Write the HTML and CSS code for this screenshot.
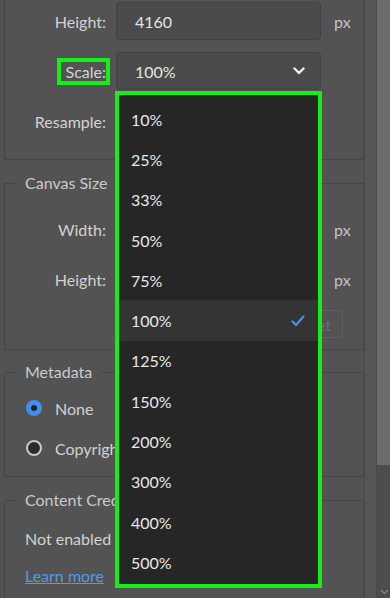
FILE: index.html
```html
<!DOCTYPE html>
<html lang="en">
<head>
  <meta charset="UTF-8" />
  <meta name="viewport" content="width=device-width, initial-scale=1.0" />
  <title>Image Size</title>
  <link rel="stylesheet" href="styles.css">
</head>
<body>
  <div class="window">
    <div class="panel">
      <section class="group group-top">
        <div class="row">
          <label class="lbl">Height:</label>
          <div class="field">4160</div>
          <span class="unit">px</span>
        </div>
        <div class="row">
          <label class="lbl"><span class="mark">Scale:</span></label>
          <div class="field select">
            <span>100%</span>
            <svg class="chev" width="12" height="8" viewBox="0 0 12 8"><path d="M1.5 1.5 L6 6 L10.5 1.5" fill="none" stroke="#f2f2f2" stroke-width="2.4" stroke-linecap="round" stroke-linejoin="round"/></svg>
          </div>
        </div>
        <div class="row">
          <label class="lbl">Resample:</label>
          <div class="field select"></div>
        </div>
      </section>

      <fieldset class="group">
        <legend>Canvas Size</legend>
        <div class="rows">
          <div class="row">
            <label class="lbl">Width:</label>
            <div class="field"></div>
            <span class="unit">px</span>
          </div>
          <div class="row">
            <label class="lbl">Height:</label>
            <div class="field"></div>
            <span class="unit">px</span>
          </div>
          <div class="btn-row">
            <button class="btn" disabled>Reset</button>
          </div>
        </div>
      </fieldset>

      <fieldset class="group">
        <legend>Metadata</legend>
        <div class="radios">
          <div class="radio-row"><span class="radio on"></span>None</div>
          <div class="radio-row"><span class="radio"></span>Copyright</div>
        </div>
      </fieldset>

      <fieldset class="group group-last">
        <legend>Content Credentials</legend>
        <div class="credits">
          <p>Not enabled</p>
          <a href="#">Learn more</a>
        </div>
      </fieldset>
    </div>

    <div class="gutter"></div>
    <div class="scrollbar">
      <div class="thumb"></div>
      <svg class="scroll-down" width="9" height="6" viewBox="0 0 9 6"><path d="M1 1 L4.5 4.5 L8 1" fill="none" stroke="#8a8a8a" stroke-width="1.2"/></svg>
    </div>

    <ul class="menu">
      <li>10%</li>
      <li>25%</li>
      <li>33%</li>
      <li>50%</li>
      <li>75%</li>
      <li class="selected">100%
        <svg width="14" height="12" viewBox="0 0 14 12"><path d="M1.5 6.5 L5 10 L12.5 1.5" fill="none" stroke="#4b8fe6" stroke-width="2.2" stroke-linecap="round" stroke-linejoin="round"/></svg>
      </li>
      <li>125%</li>
      <li>150%</li>
      <li>200%</li>
      <li>300%</li>
      <li>400%</li>
      <li>500%</li>
    </ul>
  </div>
</body>
</html>
```

FILE: styles.css
```css
:root {
  --bg: #535353;
  --line: #464646;
  --field-bg: #4b4b4b;
  --field-line: #414141;
  --text: #d2d2d2;
  --menu-bg: #262626;
  --menu-hi: #343434;
  --green: #14f014;
  --blue: #3f8ef0;
}

* { box-sizing: border-box; }

body {
  margin: 0;
  background: var(--bg);
  color: var(--text);
  font-family: Lato, 'Noto Sans', sans-serif;
  font-size: 16px;
  overflow: hidden;
}

.window {
  position: relative;
  display: flex;
  width: 390px;
  height: 598px;
  overflow: hidden;
}

.panel {
  width: 364px;
  padding-left: 4px;
}

.group {
  margin: 0;
  padding: 0;
  border: 1px solid var(--line);
  min-width: 0;
}

.group legend {
  margin-left: 11px;
  padding: 0 9px;
  line-height: 20px;
  color: #cacaca;
  white-space: nowrap;
}

.group-top {
  border-top: none;
  padding: 2px 0 19px;
}

.row {
  display: flex;
  align-items: center;
  height: 38px;
  margin-bottom: 12px;
}

.row:last-child { margin-bottom: 0; }

.lbl {
  width: 101px;
  text-align: right;
}

.mark {
  display: inline-block;
  border: 4px solid var(--green);
  padding: 0 0 0 5px;
  margin-right: -4px;
  line-height: 19px;
}

.field {
  margin-left: 10px;
  width: 205px;
  height: 38px;
  background: var(--field-bg);
  border: 1px solid var(--field-line);
  border-radius: 4px;
  padding-left: 18px;
  display: flex;
  align-items: center;
  color: #e4e4e4;
}

.select {
  justify-content: space-between;
  padding-right: 15px;
}

.unit {
  margin-left: 13px;
  color: #c4c4c4;
}

fieldset.group:nth-of-type(1) { margin-top: 13px; }

.rows { padding: 17px 0 11px; }

.btn-row {
  display: flex;
  justify-content: flex-end;
  padding-right: 20px;
  margin-top: 10px;
}

.btn {
  height: 28px;
  padding: 0 11px;
  font: inherit;
  color: #6e6e6e;
  background: transparent;
  border: 1px solid #626262;
  border-radius: 4px;
}

fieldset.group:nth-of-type(2) { margin-top: 12px; }

.radios { padding: 11px 0 13px 21px; }

.radio-row {
  display: flex;
  align-items: center;
  height: 30px;
  white-space: nowrap;
}

.radio-row + .radio-row { margin-top: 10px; }

.radio {
  flex: none;
  width: 16px;
  height: 16px;
  border-radius: 50%;
  border: 2px solid #c9c9c9;
  background: #2b2b2b;
  margin-right: 13px;
}

.radio.on {
  border: 5px solid var(--blue);
  background: #222;
}

.group-last {
  margin-top: 13px;
  height: 200px;
}

.credits { padding: 19px 0 0 20px; }

.credits p {
  margin: 0;
  line-height: 20px;
}

.credits a {
  display: inline-block;
  margin-top: 17px;
  line-height: 20px;
  color: #4f9be8;
}

.gutter {
  width: 12px;
  background: #565656;
  border-left: 1px solid #4a4a4a;
}

.scrollbar {
  position: relative;
  width: 14px;
  background: #4d4d4d;
  border-left: 1px solid #4a4a4a;
}

.thumb {
  height: 465px;
  background: #6b6b6b;
}

.scroll-down {
  position: absolute;
  left: 3px;
  bottom: 3px;
}

.menu {
  position: absolute;
  left: 115px;
  top: 91px;
  width: 207px;
  height: 497px;
  margin: 0;
  padding: 4px 0 0;
  list-style: none;
  background: var(--menu-bg);
  border: 4px solid var(--green);
  color: #e8e8e8;
  font-size: 16px;
}

.menu li {
  height: 40.3px;
  padding: 0 13px 0 12px;
  display: flex;
  align-items: center;
  justify-content: space-between;
}

.menu li.selected { background: var(--menu-hi); }
```
